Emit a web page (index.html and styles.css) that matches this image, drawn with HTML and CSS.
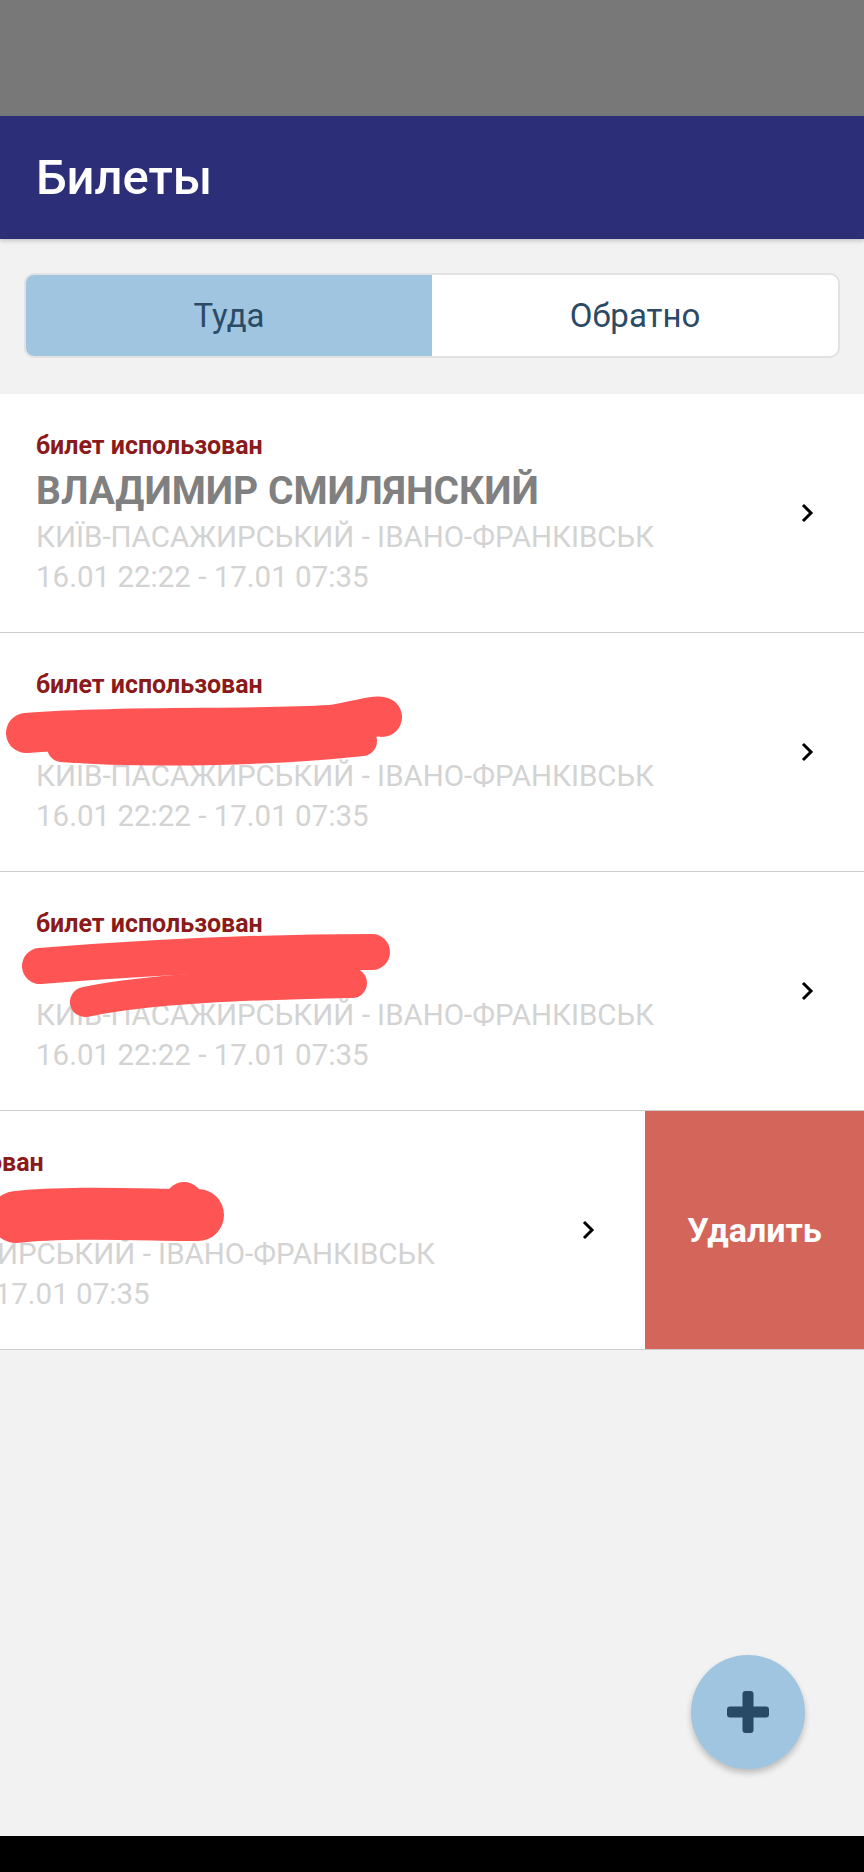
FILE: index.html
```html
<!DOCTYPE html>
<html lang="ru">
<head>
<meta charset="utf-8">
<title>Билеты</title>
<link rel="stylesheet" href="styles.css">
</head>
<body>
<div class="page">
  <div class="statusbar"></div>
  <header class="appbar"><h1>Билеты</h1></header>

  <div class="segmented">
    <div class="seg active">Туда</div>
    <div class="seg">Обратно</div>
  </div>

  <div class="list">
    <div class="row">
      <div class="row-main">
        <div class="info">
          <div class="label">билет использован</div>
          <div class="name">ВЛАДИМИР СМИЛЯНСКИЙ</div>
          <div class="route">КИЇВ-ПАСАЖИРСЬКИЙ - ІВАНО-ФРАНКІВСЬК</div>
          <div class="date">16.01 22:22 - 17.01 07:35</div>
        </div>
        <svg class="chev" viewBox="0 0 14 22"><polyline points="3,3 11,11 3,19" fill="none" stroke="#000" stroke-width="3"/></svg>
      </div>
    </div>

    <div class="row">
      <div class="row-main">
        <div class="info">
          <div class="label">билет использован</div>
          <div class="name">&nbsp;</div>
          <div class="route">КИЇВ-ПАСАЖИРСЬКИЙ - ІВАНО-ФРАНКІВСЬК</div>
          <div class="date">16.01 22:22 - 17.01 07:35</div>
        </div>
        <svg class="chev" viewBox="0 0 14 22"><polyline points="3,3 11,11 3,19" fill="none" stroke="#000" stroke-width="3"/></svg>
      </div>
      <svg class="scribble" viewBox="0 0 864 238">
        <path d="M26,100 C120,92 250,97 330,92 C358,88 372,82 382,84" fill="none" stroke="#ff5454" stroke-width="40" stroke-linecap="round"/>
        <path d="M62,114 C150,121 280,117 362,108" fill="none" stroke="#ff5454" stroke-width="30" stroke-linecap="round"/>
      </svg>
    </div>

    <div class="row">
      <div class="row-main">
        <div class="info">
          <div class="label">билет использован</div>
          <div class="name">&nbsp;</div>
          <div class="route">КИЇВ-ПАСАЖИРСЬКИЙ - ІВАНО-ФРАНКІВСЬК</div>
          <div class="date">16.01 22:22 - 17.01 07:35</div>
        </div>
        <svg class="chev" viewBox="0 0 14 22"><polyline points="3,3 11,11 3,19" fill="none" stroke="#000" stroke-width="3"/></svg>
      </div>
      <svg class="scribble" viewBox="0 0 864 238">
        <path d="M40,94 C140,86 260,80 372,80" fill="none" stroke="#ff5454" stroke-width="36" stroke-linecap="round"/>
        <path d="M85,130 C150,116 250,113 352,111" fill="none" stroke="#ff5454" stroke-width="30" stroke-linecap="round"/>
      </svg>
    </div>

    <div class="row swiped">
      <div class="row-main">
        <div class="info">
          <div class="label">билет использован</div>
          <div class="name">&nbsp;</div>
          <div class="route">КИЇВ-ПАСАЖИРСЬКИЙ - ІВАНО-ФРАНКІВСЬК</div>
          <div class="date">16.01 22:22 - 17.01 07:35</div>
        </div>
        <svg class="chev" viewBox="0 0 14 22"><polyline points="3,3 11,11 3,19" fill="none" stroke="#000" stroke-width="3"/></svg>
      </div>
      <div class="delete">Удалить</div>
      <svg class="scribble" viewBox="0 0 864 238">
        <path d="M16,106 C70,100 150,104 198,104" fill="none" stroke="#ff5454" stroke-width="52" stroke-linecap="round"/>
        <circle cx="184" cy="90" r="19" fill="#ff5454"/>
      </svg>
    </div>
  </div>

  <div class="spacer"></div>
  <div class="navbar"></div>

  <button class="fab" aria-label="Добавить">
    <svg viewBox="0 0 42 42" width="42" height="42">
      <rect x="15.5" y="0" width="11" height="42" rx="3" fill="#284a66"/>
      <rect x="0" y="15.5" width="42" height="11" rx="3" fill="#284a66"/>
    </svg>
  </button>
</div>
</body>
</html>
```

FILE: styles.css
```css
html, body {
  margin: 0;
  padding: 0;
}

body {
  background: #f2f2f2;
  font-family: Roboto, "Noto Sans", "Liberation Sans", sans-serif;
  width: 864px;
}

.page {
  position: relative;
  display: flex;
  flex-direction: column;
  min-height: 1872px;
}

.statusbar {
  height: 116px;
  background: #787878;
}

.appbar {
  position: relative;
  z-index: 1;
  height: 123px;
  background: #2c2e78;
  display: flex;
  align-items: center;
  padding-left: 36px;
  box-shadow: 0 2px 4px rgba(0, 0, 0, 0.18);
}

.appbar h1 {
  margin: 0;
  color: #ffffff;
  font-size: 49px;
  font-weight: 500;
}

.segmented {
  margin: 34px 24px 36px;
  height: 85px;
  box-sizing: border-box;
  border: 2px solid #e2e2e2;
  border-radius: 10px;
  display: flex;
  overflow: hidden;
  background: #ffffff;
}

.seg {
  flex: 1;
  display: flex;
  align-items: center;
  justify-content: center;
  font-size: 33px;
  color: #2b4a66;
}

.seg.active {
  background: #9fc5e1;
}

.row {
  position: relative;
  height: 238px;
  border-bottom: 1px solid #cdcdcd;
  background: #ffffff;
  display: flex;
  overflow: hidden;
}

.row-main {
  flex: 0 0 864px;
  box-sizing: border-box;
  display: flex;
  align-items: center;
  padding: 0 50px 0 36px;
}

.swiped .row-main {
  margin-left: -219px;
}

.info {
  flex: 1;
  white-space: nowrap;
}

.label {
  font-size: 25px;
  line-height: 30px;
  font-weight: 700;
  color: #8b1a1a;
}

.name {
  margin-top: 7px;
  font-size: 39px;
  line-height: 46px;
  font-weight: 700;
  color: #808080;
}

.route {
  margin-top: 4px;
  font-size: 29.5px;
  line-height: 38px;
  color: #d3d3d3;
}

.date {
  margin-top: 2px;
  font-size: 29.5px;
  line-height: 38px;
  color: #d3d3d3;
}

.chev {
  width: 14px;
  height: 22px;
  flex: 0 0 auto;
}

.delete {
  flex: 0 0 219px;
  background: #d4655a;
  color: #ffffff;
  font-size: 34px;
  font-weight: 700;
  display: flex;
  align-items: center;
  justify-content: center;
}

.scribble {
  position: absolute;
  left: 0;
  top: 0;
  width: 864px;
  height: 238px;
  pointer-events: none;
}

.spacer {
  flex: 1;
}

.navbar {
  height: 36px;
  background: #000000;
}

.fab {
  position: absolute;
  right: 59px;
  bottom: 103px;
  width: 114px;
  height: 114px;
  border: none;
  border-radius: 50%;
  background: #9fc5e1;
  box-shadow: 0 4px 6px rgba(0, 0, 0, 0.22);
  display: flex;
  align-items: center;
  justify-content: center;
  padding: 0;
}
```
